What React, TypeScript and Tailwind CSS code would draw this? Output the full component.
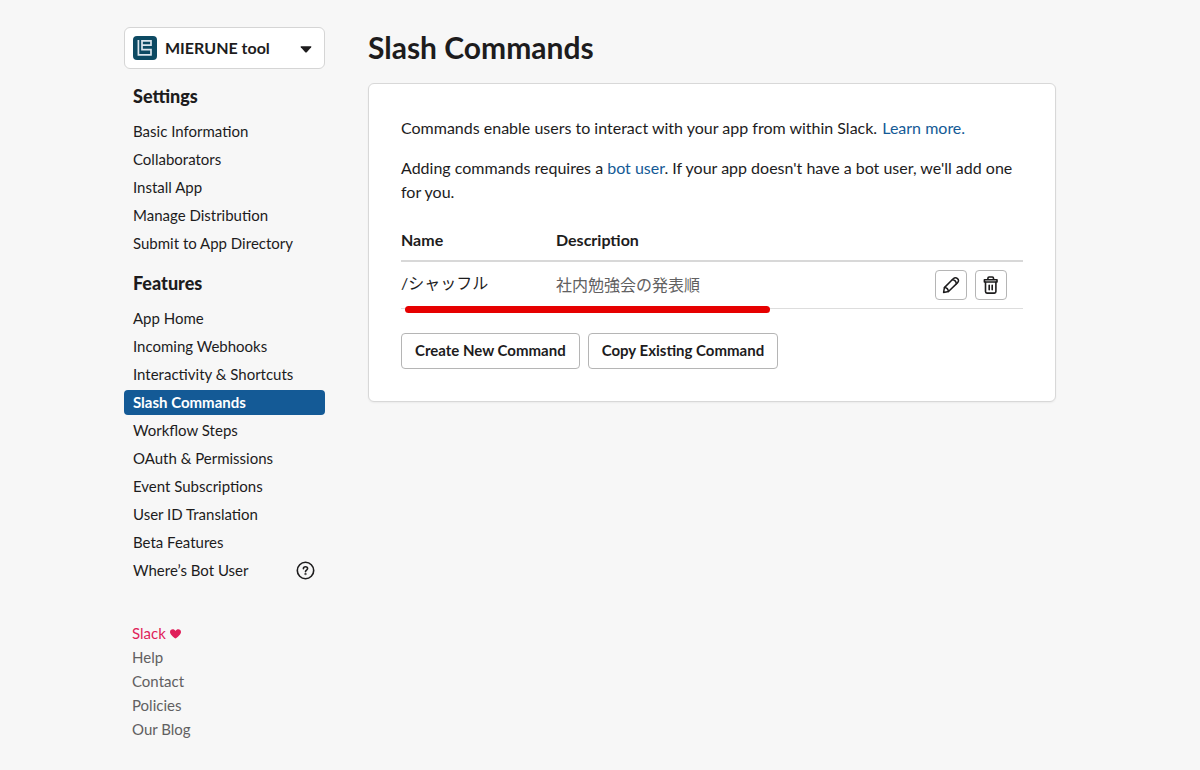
const settings = [
  'Basic Information',
  'Collaborators',
  'Install App',
  'Manage Distribution',
  'Submit to App Directory',
];

const features = [
  'App Home',
  'Incoming Webhooks',
  'Interactivity & Shortcuts',
  'Slash Commands',
  'Workflow Steps',
  'OAuth & Permissions',
  'Event Subscriptions',
  'User ID Translation',
  'Beta Features',
  'Where’s Bot User',
];

function HelpIcon() {
  return (
    <svg width="20" height="20" viewBox="0 0 20 20" fill="none" stroke="#1d1c1d" strokeWidth="1.6" strokeLinecap="round" strokeLinejoin="round">
      <circle cx="9.5" cy="9.5" r="8.2" />
      <path d="M7.4 7.7c0-1.2.9-2 2.1-2s2.1.8 2.1 1.9c0 1.5-2.1 1.6-2.1 3.1" />
      <circle cx="9.5" cy="13.1" r=".35" />
    </svg>
  );
}

function PencilIcon() {
  return (
    <svg width="20" height="20" viewBox="0 0 20 20" fill="none" stroke="#1d1c1d" strokeWidth="1.5" strokeLinecap="round" strokeLinejoin="round">
      <path d="M2.6 17.4 3.4 12.6 12.2 3.7Q14.4 1.7 16.5 3.6T16.4 7.9L7.5 16.5Z" />
      <path d="M11.4 4.7c1.9.2 3.7 1.9 4 4M3.5 12.6c2.1.2 3.7 1.8 3.9 3.9" />
    </svg>
  );
}

function TrashIcon() {
  return (
    <svg width="20" height="20" viewBox="0 0 20 20" fill="none" stroke="#1d1c1d" strokeWidth="1.6" strokeLinecap="round" strokeLinejoin="round">
      <path d="M3.4 4.7h12.6v2.3H3.4zM6.9 4.5V3.2q0-1.2 1.2-1.2h3.2q1.2 0 1.2 1.2v1.3" />
      <path d="M4.5 7.2v9.4q0 1.5 1.5 1.5h7.4q1.5 0 1.5-1.5V7.2M8.2 10.3v4.5M11.2 10.3v4.5" />
    </svg>
  );
}

function NavSection({ title, items }: { title: string; items: string[] }) {
  return (
    <section className="mt-4">
      <h2 className="px-[9px] text-lg leading-[22px] font-black">{title}</h2>
      <ul className="mt-3 flex flex-col gap-[3px]">
        {items.map((item) => (
          <li key={item}>
            <a
              href="#"
              className={
                item === 'Slash Commands'
                  ? 'flex h-[25px] items-center rounded bg-[#145a96] px-[9px] text-[15px] font-bold text-white'
                  : 'flex h-[25px] items-center justify-between px-[9px] text-[15px]'
              }
            >
              {item}
              {item === 'Where’s Bot User' && <HelpIcon />}
            </a>
          </li>
        ))}
      </ul>
    </section>
  );
}

export default function App() {
  return (
    <div className="flex min-h-screen items-start gap-[43px] bg-[#f7f7f7] pt-[27px] pr-36 pb-7 pl-[124px] font-['Lato','Noto_Sans_CJK_JP',sans-serif] text-[#1d1c1d]">
      <aside className="w-[201px] shrink-0">
        {/* App picker */}
        <div className="relative">
          <select aria-label="App" className="h-[42px] w-full appearance-none rounded-md border border-[#d5d5d5] bg-white pr-8 pl-10 text-base font-bold">
            <option>MIERUNE tool</option>
          </select>
          <svg className="pointer-events-none absolute top-[9px] left-[9px]" width="24" height="24" viewBox="0 0 24 24" fill="none">
            <rect width="24" height="24" rx="4" fill="#0d4a63" />
            <path d="M5.4 4v14.8h13.4M18 18.8v-5.200H9V4.800h9V9.200H9" stroke="#dce6ee" strokeWidth="1.7" />
          </svg>
          <svg className="pointer-events-none absolute top-[19px] right-[13px]" width="12" height="7" viewBox="0 0 12 7" fill="#1d1c1d">
            <path d="M1.3.3h9.4q1.2 0 .5 1L7 6Q6 7 5 6L.8 1.3Q.1.3 1.3.3z" />
          </svg>
        </div>

        <nav>
          <NavSection title="Settings" items={settings} />
          <NavSection title="Features" items={features} />
        </nav>

        <footer className="mt-[38px] flex flex-col px-2 text-[15px] leading-6 text-[#616061]">
          <a href="#" className="flex items-center gap-1 text-[#e01e5a]">
            Slack
            <svg width="11" height="11" viewBox="0 0 11 11" fill="#e01e5a">
              <path d="M5.5 10.6C3.2 8.8 0 6.600 0 4 0 2.300 1.200 1.300 2.700 1.300c1.200 0 2.200.6 2.800 1.700C6.100 1.900 7.100 1.300 8.300 1.300 9.800 1.300 11 2.300 11 4c0 2.600-3.200 4.800-5.500 6.600z" />
            </svg>
          </a>
          <a href="#">Help</a>
          <a href="#">Contact</a>
          <a href="#">Policies</a>
          <a href="#">Our Blog</a>
        </footer>
      </aside>

      <main className="min-w-0 flex-1">
        <h1 className="text-[30px] leading-10 font-bold">Slash Commands</h1>

        <div className="mt-4 rounded-md border border-[#d8d8d8] bg-white p-8 text-base leading-6 shadow-xs">
          <p>
            Commands enable users to interact with your app from within Slack.{' '}
            <a href="#" className="ml-px text-[#145a96]">Learn more.</a>
          </p>
          <p className="mt-4">
            Adding commands requires a <a href="#" className="text-[#145a96]">bot user</a>. If your app doesn't have a bot user, we'll add one for you.
          </p>

          <div className="relative mt-6">
            <table className="w-full table-fixed border-separate border-spacing-0 text-left">
              <thead>
                <tr>
                  <th className="w-[155px] border-b-2 border-[#d8d8d8] pb-2 font-bold">Name</th>
                  <th className="border-b-2 border-[#d8d8d8] pb-2 font-bold">Description</th>
                  <th className="w-28 border-b-2 border-[#d8d8d8] pb-2" aria-label="Actions" />
                </tr>
              </thead>
              <tbody>
                <tr>
                  <td className="h-[47px] border-b border-[#dddddd] pb-1">/シャッフル</td>
                  <td className="border-b border-[#dddddd] text-[#616061]">社内勉強会の発表順</td>
                  <td className="border-b border-[#dddddd]">
                    <div className="flex justify-end gap-2 pr-4">
                      <button aria-label="Edit" className="flex h-[30px] w-8 items-center justify-center rounded border border-[#b5b5b5] bg-white">
                        <PencilIcon />
                      </button>
                      <button aria-label="Delete" className="flex h-[30px] w-8 items-center justify-center rounded border border-[#b5b5b5] bg-white">
                        <TrashIcon />
                      </button>
                    </div>
                  </td>
                </tr>
              </tbody>
            </table>
            {/* Red marker under the command */}
            <div className="absolute -bottom-1 left-1 h-[7px] w-[365px] rounded-full bg-[#e60000]" />
          </div>

          <div className="mt-6 flex gap-2">
            <button className="h-9 rounded border border-[#b5b5b5] bg-white px-[13px] pb-0.5 text-[15px] font-bold">Create New Command</button>
            <button className="h-9 rounded border border-[#b5b5b5] bg-white px-[13px] pb-0.5 text-[15px] font-bold">Copy Existing Command</button>
          </div>
        </div>
      </main>
    </div>
  );
}
